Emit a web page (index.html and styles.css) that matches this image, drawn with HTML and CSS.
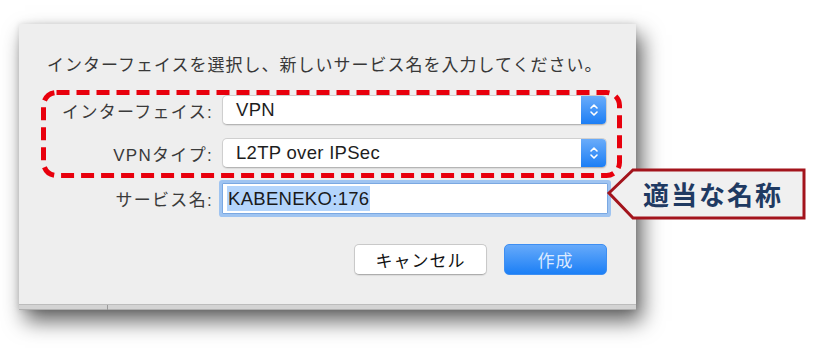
FILE: index.html
```html
<!DOCTYPE html>
<html lang="ja">
<head>
    <meta charset="UTF-8">
    <meta name="viewport" content="width=device-width, initial-scale=1.0">
    <title>サービスの作成</title>
    <link rel="stylesheet" href="styles.css">
</head>
<body>

    <div class="stage">
        <!-- Dialog window -->
        <div class="dialog">
            <p class="prompt">インターフェイスを選択し、新しいサービス名を入力してください。</p>

            <div class="form">
                <label class="label">インターフェイス:</label>
                <div class="popup">
                    <span class="popup-text">VPN</span>
                    <span class="stepper">
                        <svg width="10" height="16" viewBox="0 0 10 16"><path d="M2 6 L5 3 L8 6 M2 10 L5 13 L8 10" fill="none" stroke="#fff" stroke-width="1.6" stroke-linecap="round" stroke-linejoin="round"/></svg>
                    </span>
                </div>

                <label class="label">VPNタイプ:</label>
                <div class="popup">
                    <span class="popup-text">L2TP over IPSec</span>
                    <span class="stepper">
                        <svg width="10" height="16" viewBox="0 0 10 16"><path d="M2 6 L5 3 L8 6 M2 10 L5 13 L8 10" fill="none" stroke="#fff" stroke-width="1.6" stroke-linecap="round" stroke-linejoin="round"/></svg>
                    </span>
                </div>

                <label class="label label-field">サービス名:</label>
                <div class="field"><span class="selected">KABENEKO:176</span></div>
            </div>

            <div class="buttons">
                <button class="btn">キャンセル</button>
                <button class="btn btn-primary">作成</button>
            </div>

            <div class="bottom-strip"><span class="tick"></span></div>
        </div>

        <!-- Red dashed highlight around the two popups -->
        <svg class="highlight" width="817" height="348" viewBox="0 0 817 348">
            <rect x="43.5" y="92.5" width="576" height="83" rx="13" ry="13" fill="none" stroke="#e8000d" stroke-width="5" stroke-dasharray="13 7"/>
        </svg>

        <!-- Callout -->
        <div class="callout">
            <svg class="callout-shape" width="202" height="54" viewBox="0 0 202 54">
                <polygon points="3,25 27,2 198,2 198,50 27,50" fill="#f0f0f0" stroke="#a3141c" stroke-width="3" stroke-linejoin="miter"/>
            </svg>
            <span class="callout-text">適当な名称</span>
        </div>
    </div>

</body>
</html>
```

FILE: styles.css
```css
/* General reset */
* {
    margin: 0;
    padding: 0;
    box-sizing: border-box;
}

body {
    background-color: #ffffff;
    font-family: 'Liberation Sans', 'Noto Sans CJK JP', sans-serif;
    color: #333;
}

/* Canvas holding the screenshot */
.stage {
    position: relative;
    width: 817px;
    height: 348px;
    padding: 24px 0 0 19px;
}

/* Dialog */
.dialog {
    width: 617px;
    height: 286px;
    background-color: #eeeeee;
    display: flex;
    flex-direction: column;
    box-shadow: 0 0 6px rgba(0, 0, 0, 0.12), 6px 11px 20px rgba(0, 0, 0, 0.62);
}

.prompt {
    margin: 32px 0 0 28px;
    font-size: 17px;
    line-height: 20px;
    letter-spacing: 1px;
    color: #383838;
    white-space: nowrap;
}

/* Form rows */
.form {
    display: grid;
    grid-template-columns: 194px 385px;
    column-gap: 9px;
    row-gap: 13px;
    margin-top: 19px;
    align-items: center;
}

.label {
    text-align: right;
    font-size: 17px;
    letter-spacing: 1.3px;
    color: #3a3a3a;
    white-space: nowrap;
}

.label-field {
    margin-top: 2px;
}

.popup {
    height: 30px;
    display: flex;
    align-items: center;
    background-color: #ffffff;
    border: 1px solid #cfcfcf;
    border-bottom-color: #b5b5b5;
    border-radius: 5px;
    box-shadow: 0 1px 1px rgba(0, 0, 0, 0.08);
    overflow: hidden;
}

.popup-text {
    flex: 1;
    padding-left: 13px;
    font-size: 18.5px;
    letter-spacing: 0.3px;
    color: #1e1e1e;
}

.stepper {
    width: 25px;
    height: 100%;
    display: flex;
    align-items: center;
    justify-content: center;
    background: linear-gradient(#6aacfa, #1c7ef5);
}

/* Text field with focus ring */
.field {
    height: 31px;
    margin-top: 2px;
    margin-right: -1px;
    background-color: #ffffff;
    border: 1px solid #7aa8e2;
    box-shadow: 0 0 0 3px #9fc4f1;
    border-radius: 1px;
    padding: 2px 0 0 4px;
}

.selected {
    display: inline-block;
    height: 25px;
    line-height: 25px;
    padding: 0 1px;
    background-color: #b4d5fc;
    font-size: 18.5px;
    letter-spacing: 0.3px;
    color: #1a1a1a;
}

/* Buttons */
.buttons {
    display: flex;
    justify-content: flex-end;
    gap: 17px;
    margin: 30px 29px 0 0;
}

.btn {
    height: 31px;
    border-radius: 5px;
    font-family: 'Liberation Sans', 'Noto Sans CJK JP', sans-serif;
    font-size: 17px;
    letter-spacing: 1px;
    cursor: pointer;
}

.btn:not(.btn-primary) {
    width: 133px;
    background-color: #ffffff;
    border: 1px solid #c9c9c9;
    border-bottom-color: #adadad;
    color: #111;
    box-shadow: 0 1px 1px rgba(0, 0, 0, 0.08);
}

.btn-primary {
    width: 103px;
    border: 1px solid #3d8ef2;
    background: linear-gradient(#66aafa, #1c7ff6);
    color: #dbe9ff;
}

/* Edge of the window behind */
.bottom-strip {
    position: relative;
    margin-top: auto;
    height: 6px;
    background-color: #d3d3d3;
    border-top: 1px solid #bcbcbc;
    border-bottom: 1px solid #b0b0b0;
}

.tick {
    position: absolute;
    left: 88px;
    top: 0;
    width: 1px;
    height: 5px;
    background-color: #9a9a9a;
}

/* Overlays */
.highlight {
    position: absolute;
    left: 0;
    top: 0;
    pointer-events: none;
}

.callout {
    position: absolute;
    left: 606px;
    top: 168px;
    width: 202px;
    height: 54px;
}

.callout-shape {
    position: absolute;
    left: 0;
    top: 0;
}

.callout-text {
    position: absolute;
    left: 37px;
    top: 9px;
    font-family: 'Noto Sans CJK JP', sans-serif;
    font-weight: bold;
    font-size: 26px;
    line-height: 34px;
    letter-spacing: 2px;
    color: #1f3a62;
    white-space: nowrap;
}
```
